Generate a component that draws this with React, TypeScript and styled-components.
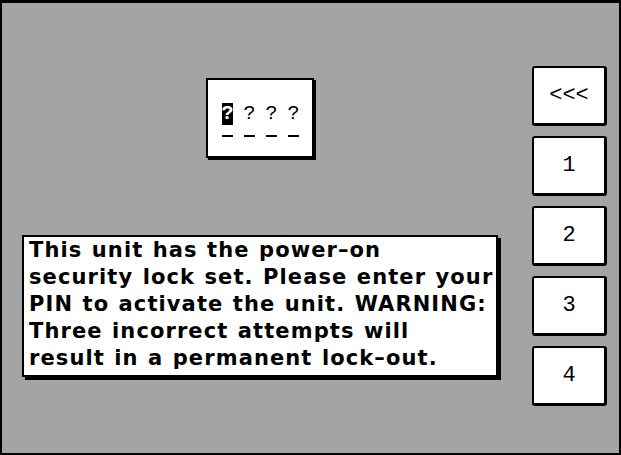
import React from "react";
import styled, { createGlobalStyle } from "styled-components";

const GlobalStyle = createGlobalStyle`
  html, body {
    margin: 0;
    padding: 0;
    background: #ffffff;
  }
`;

const Frame = styled.div`
  box-sizing: border-box;
  width: 621px;
  height: 455px;
  border: 2px solid #000;
  border-top-width: 3px;
  background: #a4a4a4;
  display: flex;
`;

const MainColumn = styled.div`
  width: 476px;
  padding: 75px 0 0 20px;
  display: flex;
  flex-direction: column;
  align-items: center;
`;

const PinBox = styled.div`
  box-sizing: border-box;
  width: 108px;
  height: 80px;
  background: #fff;
  border: 2px solid #000;
  box-shadow: 2px 2px 0 #000;
  display: flex;
  justify-content: center;
  align-items: flex-start;
  gap: 11px;
  padding-top: 23px;
`;

const Slot = styled.div`
  width: 11px;
  display: flex;
  flex-direction: column;
  align-items: center;
`;

const SlotChar = styled.div<{ $active: boolean }>`
  width: 11px;
  height: 22px;
  background: ${({ $active }) => ($active ? "#000" : "transparent")};
  color: ${({ $active }) => ($active ? "#fff" : "#000")};
  font-family: "Liberation Mono", monospace;
  font-size: 20px;
  line-height: 22px;
  text-align: center;
  font-weight: ${({ $active }) => ($active ? "bold" : "normal")};
`;

const SlotLine = styled.div`
  width: 11px;
  height: 2px;
  margin-top: 10px;
  background: #000;
`;

const Message = styled.div`
  box-sizing: border-box;
  align-self: stretch;
  margin-top: 77px;
  height: 142px;
  background: #fff;
  border: 2px solid #000;
  box-shadow: 3px 3px 0 #000;
  padding: 0 0 0 5px;
  font-family: "DejaVu Sans", sans-serif;
  font-weight: bold;
  font-size: 21px;
  line-height: 27px;
  letter-spacing: 1.1px;
  word-spacing: 1px;
  color: #000;
  white-space: pre;
`;

const KeyColumn = styled.div`
  margin-left: 34px;
  padding-top: 63px;
  display: flex;
  flex-direction: column;
  gap: 10px;
`;

const Key = styled.div`
  box-sizing: border-box;
  width: 75px;
  height: 60px;
  background: #fff;
  border: solid #000;
  border-width: 2px 3px 3px 2px;
  border-radius: 3px;
  display: flex;
  align-items: center;
  justify-content: center;
  font-family: "Liberation Mono", monospace;
  font-size: 22px;
  color: #000;
`;

const MESSAGE = [
  "This unit has the power\u2013on",
  "security lock set. Please enter your",
  "PIN to activate the unit. WARNING:",
  "Three incorrect attempts will",
  "result in a permanent lock\u2013out.",
].join("\n");

const KEYS = ["<<<", "1", "2", "3", "4"];

function App() {
  return (
    <>
      <GlobalStyle />
      <Frame>
        <MainColumn>
          <PinBox>
            {[0, 1, 2, 3].map((i) => (
              <Slot key={i}>
                <SlotChar $active={i === 0}>?</SlotChar>
                <SlotLine />
              </Slot>
            ))}
          </PinBox>
          <Message>{MESSAGE}</Message>
        </MainColumn>
        <KeyColumn>
          {KEYS.map((k) => (
            <Key key={k}>{k}</Key>
          ))}
        </KeyColumn>
      </Frame>
    </>
  );
}

export default App;
